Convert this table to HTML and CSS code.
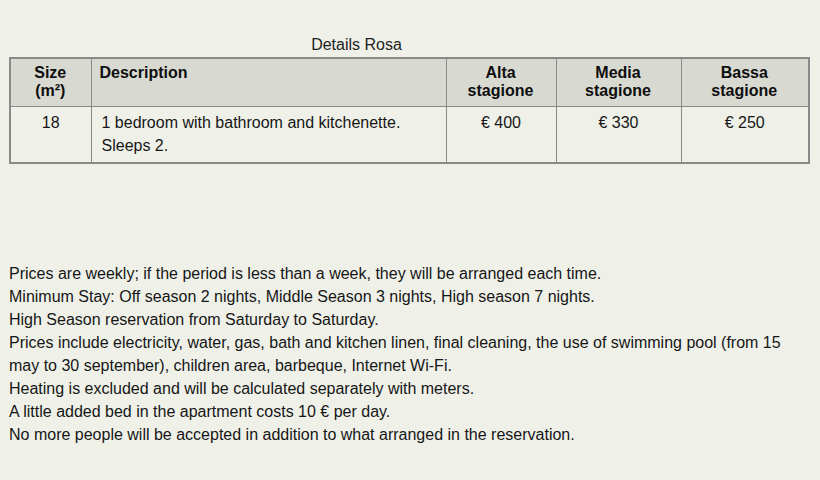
FILE: index.html
```html
<!DOCTYPE html>
<html>
<head>
<meta charset="utf-8">
<link rel="stylesheet" href="styles.css">
</head>
<body>
<div class="page">
  <table class="rates">
    <caption>Details Rosa</caption>
    <colgroup>
      <col class="c-size">
      <col class="c-desc">
      <col class="c-alta">
      <col class="c-media">
      <col class="c-bassa">
    </colgroup>
    <thead>
      <tr>
        <th>Size<br>(m²)</th>
        <th class="left">Description</th>
        <th>Alta<br>stagione</th>
        <th>Media<br>stagione</th>
        <th>Bassa<br>stagione</th>
      </tr>
    </thead>
    <tbody>
      <tr>
        <td>18</td>
        <td class="left">1 bedroom with bathroom and kitchenette.<br>Sleeps 2.</td>
        <td>€ 400</td>
        <td>€ 330</td>
        <td>€ 250</td>
      </tr>
    </tbody>
  </table>
  <div class="notes">
    <p>Prices are weekly; if the period is less than a week, they will be arranged each time.</p>
    <p>Minimum Stay: Off season 2 nights, Middle Season 3 nights, High season 7 nights.</p>
    <p>High Season reservation from Saturday to Saturday.</p>
    <p>Prices include electricity, water, gas, bath and kitchen linen, final cleaning, the use of swimming pool (from 15 may to 30 september), children area, barbeque, Internet Wi-Fi.</p>
    <p>Heating is excluded and will be calculated separately with meters.</p>
    <p>A little added bed in the apartment costs 10 € per day.</p>
    <p>No more people will be accepted in addition to what arranged in the reservation.</p>
  </div>
</div>
</body>
</html>
```

FILE: styles.css
```css
html, body {
  margin: 0;
  padding: 0;
  background: #eff1e9;
}
body {
  font-family: "Liberation Sans", Arial, sans-serif;
  font-size: 16px;
  color: #161616;
}
.page {
  padding: 36px 9px 0 9px;
}
.rates {
  width: 799px;
  border-collapse: collapse;
  table-layout: fixed;
  border: 2px solid #8a8a8a;
}
.rates caption {
  caption-side: top;
  text-align: center;
  padding: 0 106px 3px 0;
  line-height: 18px;
  color: #1e1e1e;
}
.c-size { width: 81px; }
.c-desc { width: 355px; }
.c-alta { width: 110px; }
.c-media { width: 125px; }
.c-bassa { width: 128px; }
.rates th {
  background: #d8dad2;
  font-weight: bold;
  line-height: 18px;
  padding: 5px 9px 6px 8px;
  text-align: center;
  vertical-align: top;
  border: 1px solid #8a8a8a;
  color: #0e0e0e;
}
.rates td {
  line-height: 23px;
  padding: 4px 10px 5px 10px;
  text-align: center;
  vertical-align: top;
  border: 1px solid #8a8a8a;
}
.rates .left {
  text-align: left;
}
.notes {
  margin-top: 98px;
  width: 800px;
}
.notes p {
  margin: 0;
  line-height: 23px;
}
```
